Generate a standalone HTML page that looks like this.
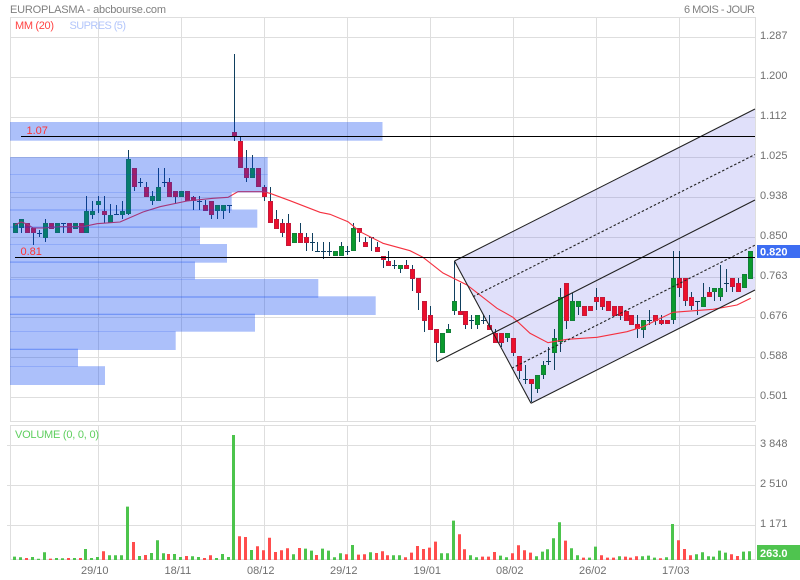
<!DOCTYPE html>
<html><head><meta charset="utf-8"><title>EUROPLASMA</title>
<style>
html,body{margin:0;padding:0;background:#fff;width:800px;height:580px;overflow:hidden}
svg{display:block}
text{font-family:"Liberation Sans",sans-serif;font-size:11px}
</style></head><body>
<svg width="800" height="580" viewBox="0 0 800 580" xmlns="http://www.w3.org/2000/svg">
<rect width="800" height="580" fill="#fff"/>
<!-- grid -->
<g shape-rendering="crispEdges" stroke="#dedede" fill="none">
<path d="M10 17.5H755.5M10 37.5H755M10 77.5H755M10 117.5H755M10 157.5H755M10 197.5H755M10 237.5H755M10 277.5H755M10 317.5H755M10 357.5H755M10 397.5H755M10 421.5H755.5"/>
<path d="M10.5 17V421M755.5 17V421M98.5 17V421M181.5 17V421M264.5 17V421M347.5 17V421M430.5 17V421M513.5 17V421M596.5 17V421M679.5 17V421"/>
<path d="M10 425.5H755.5M7 445.5H755M7 485.5H755M7 525.5H755M10 559.5H755"/>
<path d="M10.5 425V560M755.5 425V560M98.5 425V560M181.5 425V560M264.5 425V560M347.5 425V560M430.5 425V560M513.5 425V560M596.5 425V560M679.5 425V560"/>
</g>
<!-- channel fill -->
<polygon points="454.5,261 755,109 755,290 531,403.3" fill="rgb(100,100,230)" fill-opacity=".2"/>
<!-- volume bars -->
<path fill="#4cc44c" d="M13 556.6h3V560h-3zM19 557.3h3V560h-3zM31 557h3V560h-3zM37 558.8h3V560h-3zM43 552.3h3V560h-3zM55 558h3V560h-3zM61 558.3h3V560h-3zM73 558h3V560h-3zM84 549h3V560h-3zM90 558h3V560h-3zM96 557h3V560h-3zM108 555.3h3V560h-3zM114 555.3h3V560h-3zM120 555.3h3V560h-3zM126 506.6h3V560h-3zM138 556h3V560h-3zM150 553h3V560h-3zM156 540.3h3V560h-3zM162 553.3h3V560h-3zM173 554h3V560h-3zM179 557h3V560h-3zM191 556.3h3V560h-3zM197 557h3V560h-3zM215 558h3V560h-3zM221 554h3V560h-3zM227 557h3V560h-3zM232 435h3V560h-3zM250 550h3V560h-3zM292 554.3h3V560h-3zM304 548.6h3V560h-3zM310 550.6h3V560h-3zM321 548.6h3V560h-3zM327 550.6h3V560h-3zM333 557.3h3V560h-3zM339 553.3h3V560h-3zM351 545h3V560h-3zM369 552.3h3V560h-3zM392 555.3h3V560h-3zM398 555.3h3V560h-3zM440 553.3h3V560h-3zM446 553.3h3V560h-3zM452 520.6h3V560h-3zM469 555.3h3V560h-3zM475 557.3h3V560h-3zM499 555.6h3V560h-3zM505 557.3h3V560h-3zM535 556.3h3V560h-3zM541 551.6h3V560h-3zM546 549.3h3V560h-3zM552 538.3h3V560h-3zM558 522.3h3V560h-3zM570 548.3h3V560h-3zM576 555.3h3V560h-3zM588 557.6h3V560h-3zM594 546.6h3V560h-3zM618 556.3h3V560h-3zM641 556.3h3V560h-3zM647 555.6h3V560h-3zM653 557.6h3V560h-3zM665 557.3h3V560h-3zM671 524h3V560h-3zM695 554.3h3V560h-3zM701 552.3h3V560h-3zM707 556.3h3V560h-3zM712 556.6h3V560h-3zM718 550.6h3V560h-3zM724 552.6h3V560h-3zM742 551.6h3V560h-3zM748 551.3h3V560h-3z"/>
<path fill="#ff4d4d" d="M25 558h3V560h-3zM49 558.6h3V560h-3zM67 558h3V560h-3zM79 558h3V560h-3zM102 551.3h3V560h-3zM132 542h3V560h-3zM144 555h3V560h-3zM167 554h3V560h-3zM185 556h3V560h-3zM203 558h3V560h-3zM209 555.3h3V560h-3zM238 536.3h3V560h-3zM244 537h3V560h-3zM256 546.3h3V560h-3zM262 550.3h3V560h-3zM268 537.8h3V560h-3zM274 552h3V560h-3zM280 550.3h3V560h-3zM286 548.3h3V560h-3zM298 548h3V560h-3zM315 555h3V560h-3zM345 554.3h3V560h-3zM357 554.6h3V560h-3zM363 554.3h3V560h-3zM375 553h3V560h-3zM381 551.3h3V560h-3zM386 555.3h3V560h-3zM404 557.3h3V560h-3zM410 552.6h3V560h-3zM416 546h3V560h-3zM422 549h3V560h-3zM428 547.6h3V560h-3zM434 541.6h3V560h-3zM458 534.3h3V560h-3zM463 549.3h3V560h-3zM481 556.6h3V560h-3zM487 556.6h3V560h-3zM493 552h3V560h-3zM511 553.3h3V560h-3zM517 545.3h3V560h-3zM523 550.3h3V560h-3zM529 552.6h3V560h-3zM564 540.6h3V560h-3zM582 557.6h3V560h-3zM600 555.3h3V560h-3zM606 557.6h3V560h-3zM612 557.6h3V560h-3zM624 556.6h3V560h-3zM629 557.6h3V560h-3zM635 556.3h3V560h-3zM659 558.3h3V560h-3zM677 540.3h3V560h-3zM683 549h3V560h-3zM689 555.3h3V560h-3zM730 554.3h3V560h-3zM736 556h3V560h-3z"/>
<!-- wicks -->
<path fill="none" stroke="#0f3f5f" stroke-width="1" d="M21.5 219V233M33.5 228V245M39.5 230V237M37 233.5h5M45.5 219V242M63.5 223V233M61 223.5h5M86.5 196V233M92.5 201V219M98.5 196V213M104.5 196V223M110.5 204V223M116.5 205V214M114 214.5h5M122.5 201V219M128.5 150V215M134.5 168V191M140.5 178V187M138 182.5h5M146.5 182V197M152.5 191V205M158.5 168V201M164.5 168V187M162 182.5h5M169.5 178V197M175.5 191V204M193.5 196V210M199.5 196V210M197 201.5h5M205.5 200V211M211.5 201V219M217.5 205V219M223.5 205V219M229.5 205V213M227 205.5h5M234.5 54V141M240.5 137V168M246.5 150V182M252.5 155V178M264.5 185V201M270.5 187V223M276.5 210V229M282.5 219V237M288.5 214V246M300.5 223V243M306.5 233V251M312.5 233V251M310 242.5h5M317.5 242V251M315 251.5h5M323.5 242V259M321 251.5h5M329.5 242V256M327 251.5h5M341.5 242V256M347.5 246V255M345 251.5h5M353.5 223V251M359.5 228V242M365.5 237V247M371.5 237V251M369 237.5h5M377.5 242V252M383.5 256V268M388.5 251V266M394.5 260V269M392 265.5h5M400.5 265V273M406.5 260V269M412.5 265V291M418.5 278V310M424.5 301V332M430.5 306V330M436.5 329V361M448.5 324V333M454.5 261V315M460.5 283V315M465.5 311V329M471.5 315V329M469 320.5h5M477.5 315V329M483.5 315V324M481 320.5h5M489.5 315V330M495.5 329V343M501.5 333V347M507.5 333V342M513.5 338V356M519.5 356V379M525.5 365V384M523 379.5h5M531.5 379V402M537.5 375V393M543.5 361V379M548.5 347V365M546 361.5h5M554.5 329V370M560.5 288V352M566.5 283V329M572.5 293V321M578.5 301V315M596.5 288V310M602.5 297V310M608.5 301V311M620.5 306V320M637.5 315V338M643.5 320V338M649.5 310V325M647 320.5h5M655.5 315V325M661.5 315V325M673.5 251V324M679.5 251V297M685.5 278V306M691.5 292V310M697.5 301V315M695 301.5h5M703.5 283V307M709.5 287V297M714.5 288V301M720.5 265V301M726.5 269V292M724 283.5h5M732.5 278V292M738.5 278V292"/>
<!-- red bodies -->
<path fill="#ec0f2a" stroke="#c4183a" stroke-width="1" d="M25.5 223.5h4v9h-4zM31.5 228.5h4v4h-4zM49.5 223.5h4v5h-4zM67.5 223.5h4v9h-4zM79.5 223.5h4v9h-4zM102.5 211.5h4v3h-4zM132.5 168.5h4v18h-4zM144.5 187.5h4v9h-4zM167.5 182.5h4v14h-4zM173.5 191.5h4v5h-4zM185.5 191.5h4v9h-4zM191.5 197.5h4v3h-4zM203.5 205.5h4v5h-4zM209.5 201.5h4v13h-4zM232.5 132.5h4v4h-4zM238.5 141.5h4v26h-4zM244.5 168.5h4v9h-4zM256.5 168.5h4v18h-4zM262.5 187.5h4v9h-4zM268.5 201.5h4v21h-4zM274.5 219.5h4v9h-4zM280.5 223.5h4v9h-4zM286.5 223.5h4v22h-4zM298.5 233.5h4v9h-4zM304.5 237.5h4v5h-4zM357.5 228.5h4v4h-4zM363.5 242.5h4v4h-4zM375.5 247.5h4v4h-4zM381.5 256.5h4v3h-4zM386.5 261.5h4v4h-4zM404.5 265.5h4v3h-4zM410.5 269.5h4v9h-4zM416.5 278.5h4v14h-4zM422.5 301.5h4v19h-4zM428.5 315.5h4v14h-4zM434.5 329.5h4v13h-4zM458.5 311.5h4v3h-4zM463.5 311.5h4v13h-4zM487.5 325.5h4v4h-4zM493.5 333.5h4v9h-4zM499.5 333.5h4v9h-4zM511.5 338.5h4v14h-4zM517.5 356.5h4v14h-4zM529.5 379.5h4v4h-4zM564.5 283.5h4v37h-4zM582.5 306.5h4v9h-4zM588.5 306.5h4v4h-4zM594.5 297.5h4v4h-4zM600.5 297.5h4v9h-4zM606.5 301.5h4v9h-4zM612.5 306.5h4v9h-4zM618.5 306.5h4v9h-4zM624.5 311.5h4v9h-4zM629.5 315.5h4v9h-4zM635.5 324.5h4v4h-4zM653.5 315.5h4v5h-4zM659.5 320.5h4v3h-4zM665.5 320.5h4v3h-4zM677.5 278.5h4v9h-4zM683.5 278.5h4v22h-4zM689.5 297.5h4v8h-4zM707.5 292.5h4v4h-4zM730.5 278.5h4v8h-4zM736.5 283.5h4v8h-4z"/>
<!-- green bodies -->
<path fill="#0a9a2c" stroke="#128038" stroke-width="1" d="M13.5 223.5h4v9h-4zM19.5 219.5h4v8h-4zM43.5 223.5h4v14h-4zM55.5 223.5h4v9h-4zM73.5 223.5h4v5h-4zM84.5 211.5h4v21h-4zM90.5 211.5h4v3h-4zM96.5 201.5h4v3h-4zM108.5 215.5h4v7h-4zM120.5 211.5h4v3h-4zM126.5 159.5h4v54h-4zM150.5 196.5h4v4h-4zM156.5 187.5h4v13h-4zM179.5 191.5h4v5h-4zM215.5 205.5h4v5h-4zM221.5 205.5h4v5h-4zM250.5 168.5h4v9h-4zM292.5 233.5h4v9h-4zM333.5 251.5h4v4h-4zM339.5 246.5h4v9h-4zM351.5 228.5h4v22h-4zM398.5 265.5h4v3h-4zM440.5 333.5h4v19h-4zM446.5 329.5h4v3h-4zM452.5 301.5h4v9h-4zM475.5 315.5h4v9h-4zM505.5 333.5h4v4h-4zM535.5 375.5h4v13h-4zM541.5 365.5h4v9h-4zM552.5 338.5h4v14h-4zM558.5 297.5h4v44h-4zM570.5 301.5h4v19h-4zM576.5 301.5h4v5h-4zM641.5 320.5h4v9h-4zM671.5 278.5h4v41h-4zM701.5 297.5h4v9h-4zM712.5 288.5h4v3h-4zM718.5 288.5h4v8h-4zM742.5 274.5h4v13h-4zM748.5 251.5h4v27h-4z"/>
<!-- moving average -->
<polyline fill="none" stroke="#f5303f" stroke-width="1.1" points="15,225 21,222 27,224 33,228 43,228 60,226.7 83,226.7 97,223.7 120,222 143,212 160,206.7 187,201 213,198.3 228,197.3 238,191.7 263,191.7 270,193.3 290,200.7 320,212.3 330,214.3 348,221.7 360,231.7 383,243.3 410,250.7 423,257.3 443,273 467,285 497,308.3 513,317.3 530,333.3 548,342.7 567,339.3 597,337.3 627,331.7 643,326.7 673,312.3 713,309.3 737,305 750.7,298.3"/>
<!-- channel lines -->
<g fill="none" stroke="#222" stroke-width="1.1">
<path d="M454.5 261L755 109M436.7 361.7L755 200M531 403.3L755 290M454.5 261L531 403.3"/>
<path stroke-dasharray="2.5 2" d="M473 296.7L755 154.5M511.7 368.3L755 245.2"/>
</g>
<!-- volume profile bands -->
<g fill="rgb(3,64,240)" fill-opacity=".33">
<rect x="10" y="122" width="372.5" height="18.7"/>
<rect x="10" y="157" width="257.7" height="18"/>
<rect x="10" y="174.5" width="257.7" height="18"/>
<rect x="10" y="192" width="221.7" height="18.5"/>
<rect x="10" y="209.5" width="247.3" height="18.2"/>
<rect x="10" y="226.5" width="190" height="18"/>
<rect x="10" y="244" width="217" height="18.7"/>
<rect x="10" y="261.5" width="185" height="18"/>
<rect x="10" y="279" width="308.3" height="18.7"/>
<rect x="10" y="296.3" width="365.7" height="18.7"/>
<rect x="10" y="313.7" width="245" height="18"/>
<rect x="10" y="331.2" width="165.7" height="18.8"/>
<rect x="10" y="348.7" width="68" height="18"/>
<rect x="10" y="366.2" width="95" height="18.8"/>
</g>
<!-- level lines -->
<g stroke="#000" stroke-width="1" shape-rendering="crispEdges">
<path d="M21 136.5H755M15 257.5H755"/>
</g>
<!-- text -->
<text x="10" y="13" fill="#808080" textLength="156">EUROPLASMA - abcbourse.com</text>
<text x="684" y="13" fill="#808080" textLength="71">6 MOIS - JOUR</text>
<text x="15" y="29" fill="#f44" textLength="39">MM (20)</text>
<text x="69.5" y="29" fill="#b3c6fb" textLength="56.5">SUPRES (5)</text>
<text x="26.5" y="134" fill="#f33">1.07</text>
<text x="20.5" y="255" fill="#f33">0.81</text>
<text x="15" y="438" fill="#5fcf5f" textLength="84">VOLUME (0, 0, 0)</text>
<g fill="#707070">
<text x="760" y="39">1.287</text>
<text x="760" y="79">1.200</text>
<text x="760" y="119">1.112</text>
<text x="760" y="159">1.025</text>
<text x="760" y="199">0.938</text>
<text x="760" y="239">0.850</text>
<text x="760" y="279">0.763</text>
<text x="760" y="319">0.676</text>
<text x="760" y="359">0.588</text>
<text x="760" y="399">0.501</text>
<text x="760" y="447">3 848</text>
<text x="760" y="487">2 510</text>
<text x="760" y="527">1 171</text>
<text x="81" y="574">29/10</text>
<text x="164.5" y="574">18/11</text>
<text x="247" y="574">08/12</text>
<text x="330" y="574">29/12</text>
<text x="413.5" y="574">19/01</text>
<text x="496" y="574">08/02</text>
<text x="579" y="574">26/02</text>
<text x="662" y="574">17/03</text>
</g>
<rect x="757" y="245" width="43" height="13" fill="#3d6df2"/>
<text x="760" y="255.5" fill="#fff" font-weight="bold">0.820</text>
<rect x="757" y="545" width="43" height="15" fill="#4fc44f"/>
<text x="760" y="557" fill="#fff" font-weight="bold">263.0</text>
</svg>
</body></html>
